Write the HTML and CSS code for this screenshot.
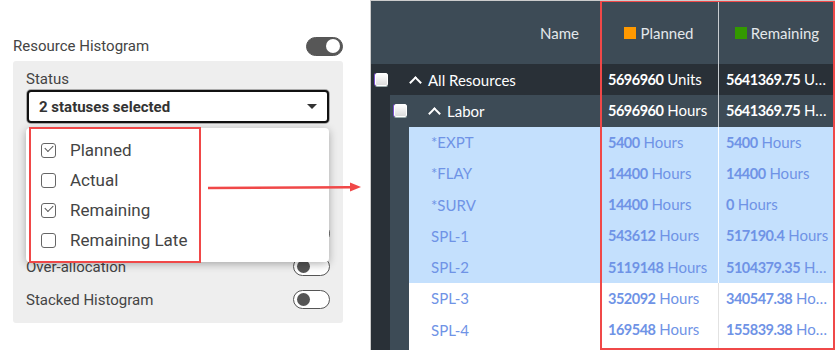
FILE: index.html
```html
<!DOCTYPE html>
<html lang="en">
<head>
    <meta charset="UTF-8">
    <meta name="viewport" content="width=device-width, initial-scale=1.0">
    <title>Resource Histogram</title>
    <link rel="stylesheet" href="styles.css">
</head>
<body>
    <div class="side">
        <div class="setting-row top">
            <span>Resource Histogram</span>
            <span class="toggle on"><span class="knob"></span></span>
        </div>
        <div class="settings">
            <div class="field-label">Status</div>
            <div class="select">
                <span>2 statuses selected</span>
                <span class="caret"></span>
            </div>
            <div class="toggles">
                <div class="setting-row"><span></span><span class="toggle"><span class="knob"></span></span></div>
                <div class="setting-row"><span>Over-allocation</span><span class="toggle"><span class="knob"></span></span></div>
                <div class="setting-row"><span>Stacked Histogram</span><span class="toggle"><span class="knob"></span></span></div>
            </div>

            <div class="dropdown">
                <div class="option"><span class="check checked"></span>Planned</div>
                <div class="option"><span class="check"></span>Actual</div>
                <div class="option"><span class="check checked"></span>Remaining</div>
                <div class="option"><span class="check"></span>Remaining Late</div>
            </div>
        </div>
        <div class="highlight-left"></div>
        <svg class="arrow" width="160" height="20" viewBox="0 0 160 20">
            <line x1="2" y1="9" x2="145" y2="8.2" stroke="#f04848" stroke-width="2.5"/>
            <polygon points="144,3.5 155,8 144,12.5" fill="#f04848"/>
        </svg>
    </div>

    <div class="grid">
        <div class="head">
            <div class="h-name">Name</div>
            <div class="h-col"><span class="swatch orange"></span>Planned</div>
            <div class="h-col"><span class="swatch green"></span>Remaining</div>
        </div>
        <div class="row lvl0">
            <div class="name"><span class="box"></span><span class="chev"></span>All Resources</div>
            <div class="val"><b>5696960</b> Units</div>
            <div class="val"><b>5641369.75</b> Units</div>
        </div>
        <div class="group g0">
            <div class="strip dark"></div>
            <div class="group-body">
                <div class="row lvl1">
                    <div class="name"><span class="box"></span><span class="chev"></span>Labor</div>
                    <div class="val"><b>5696960</b> Hours</div>
                    <div class="val"><b>5641369.75</b> Hours</div>
                </div>
                <div class="group">
                    <div class="strip slate"></div>
                    <div class="group-body">
                        <div class="row leaf sel"><div class="name">*EXPT</div><div class="val"><b>5400</b> Hours</div><div class="val"><b>5400</b> Hours</div></div>
                        <div class="row leaf sel"><div class="name">*FLAY</div><div class="val"><b>14400</b> Hours</div><div class="val"><b>14400</b> Hours</div></div>
                        <div class="row leaf sel"><div class="name">*SURV</div><div class="val"><b>14400</b> Hours</div><div class="val"><b>0</b> Hours</div></div>
                        <div class="row leaf sel"><div class="name">SPL-1</div><div class="val"><b>543612</b> Hours</div><div class="val"><b>517190.4</b> Hours</div></div>
                        <div class="row leaf sel"><div class="name">SPL-2</div><div class="val"><b>5119148</b> Hours</div><div class="val"><b>5104379.35</b> Hours</div></div>
                        <div class="row leaf"><div class="name">SPL-3</div><div class="val"><b>352092</b> Hours</div><div class="val"><b>340547.38</b> Hours</div></div>
                        <div class="row leaf"><div class="name">SPL-4</div><div class="val"><b>169548</b> Hours</div><div class="val"><b>155839.38</b> Hours</div></div>
                        <div class="row leaf filler"><div class="name"></div><div class="val"></div><div class="val"></div></div>
                    </div>
                </div>
            </div>
        </div>
        <div class="highlight-right"></div>
    </div>
</body>
</html>
```

FILE: styles.css
```css
body {
    margin: 0;
    display: flex;
    height: 350px;
    overflow: hidden;
    background-color: #fff;
}

/* left settings panel */

.side {
    position: relative;
    width: 370px;
    padding: 36px 0 0 13px;
    box-sizing: border-box;
    font-family: Roboto, "Liberation Sans", sans-serif;
    color: #444;
}

.setting-row {
    display: flex;
    justify-content: space-between;
    align-items: center;
    height: 33px;
    font-size: 15px;
}

.setting-row.top {
    width: 330px;
    height: 20px;
}

.toggles {
    margin-top: 94px;
}

.toggle {
    position: relative;
    width: 35px;
    height: 17px;
    border: 1px solid #555;
    border-radius: 10px;
    background-color: #fff;
}

.toggle .knob {
    position: absolute;
    left: 3px;
    top: 2px;
    width: 13px;
    height: 13px;
    border-radius: 50%;
    background-color: #555;
}

.toggle.on {
    background-color: #575757;
}

.toggle.on .knob {
    left: auto;
    right: 2px;
    width: 14px;
    height: 14px;
    top: 1.5px;
    background-color: #fff;
}

.settings {
    position: relative;
    width: 330px;
    height: 262px;
    margin-top: 5px;
    padding: 9px 13px 0 13px;
    box-sizing: border-box;
    background-color: #eee;
    border-radius: 3px;
    overflow: hidden;
}

.field-label {
    font-size: 15px;
    height: 20px;
}

.select {
    display: flex;
    justify-content: space-between;
    align-items: center;
    height: 33px;
    margin: 0 1px 1px 1px;
    padding: 0 10px;
    border: 2px solid #111;
    border-radius: 4px;
    box-sizing: border-box;
    background-color: #fff;
    font-size: 15px;
    font-weight: bold;
    color: #333;
    box-shadow: 0 0 0 1px #aaa;
}

.caret {
    width: 0;
    height: 0;
    border-left: 5px solid transparent;
    border-right: 5px solid transparent;
    border-top: 5px solid #333;
}

.dropdown {
    position: absolute;
    left: 13px;
    top: 67px;
    width: 303px;
    height: 134px;
    padding-top: 7px;
    box-sizing: border-box;
    background-color: #fff;
    border-radius: 4px;
    box-shadow: 0 2px 8px rgba(0,0,0,0.3);
}

.option {
    display: flex;
    align-items: center;
    height: 30px;
    padding-left: 15px;
    font-size: 17px;
    color: #444;
}

.check {
    position: relative;
    width: 13px;
    height: 13px;
    margin-right: 14px;
    border: 1.5px solid #666;
    border-radius: 3px;
}

.check.checked::after {
    content: "";
    position: absolute;
    left: 3px;
    top: 1px;
    width: 7px;
    height: 4px;
    border-left: 1.3px solid #555;
    border-bottom: 1.3px solid #555;
    transform: rotate(-45deg);
}

.highlight-left {
    position: absolute;
    left: 29px;
    top: 127px;
    width: 168px;
    height: 132px;
    border: 2px solid #f04848;
}

.arrow {
    position: absolute;
    left: 206px;
    top: 179px;
}

/* resource grid */

.grid {
    position: relative;
    width: 465px;
    height: 350px;
    overflow: hidden;
    border-left: 1px solid #ccc;
    border-top: 1px solid #ccc;
    box-sizing: border-box;
    font-family: Lato, "Liberation Sans", sans-serif;
    font-size: 15px;
    background-color: #fff;
}

.head {
    display: grid;
    grid-template-columns: 1fr 118px 117px;
    height: 63px;
    background-color: #3d4b56;
    color: #e4e8eb;
}

.h-name {
    display: flex;
    align-items: center;
    justify-content: flex-end;
    padding-right: 21px;
}

.h-col {
    display: flex;
    align-items: center;
    justify-content: center;
}

.h-col:last-child {
    border-left: 1px solid #c8cdd1;
}

.swatch {
    width: 12px;
    height: 12px;
    margin-right: 4px;
}

.swatch.orange {
    background-color: #ff9900;
}

.swatch.green {
    background-color: #339900;
}

.row {
    display: grid;
    grid-template-columns: minmax(0, 1fr) 118px 117px;
    height: 31.25px;
}

.name {
    display: flex;
    align-items: center;
    white-space: nowrap;
    overflow: hidden;
}

.val {
    min-width: 0;
    padding-left: 8px;
    line-height: 31.25px;
    white-space: nowrap;
    overflow: hidden;
    text-overflow: ellipsis;
}

.val b {
    font-size: 14.5px;
    letter-spacing: -0.5px;
}

.val:last-child {
    border-left: 1px solid #e2e2e2;
    padding-left: 7px;
    padding-right: 4px;
}

.lvl0 {
    background-color: #293037;
    color: #fff;
}

.lvl1 {
    background-color: #3d4b56;
    color: #fff;
}

.lvl0 .val:last-child,
.lvl1 .val:last-child {
    border-left-color: #c8cdd1;
}

.lvl0 .name,
.lvl1 .name {
    padding-left: 4px;
}

.box {
    width: 11px;
    height: 11px;
    border: 1px solid #fff;
    border-radius: 2px;
    background: linear-gradient(#fff, #dcdcdc);
    box-shadow: -1px 0 0 #7a4fd0, 0 1px 0 #9aa;
    margin-right: 22px;
}

.chev {
    width: 7px;
    height: 7px;
    margin: 5px 8px 0 1px;
    border-left: 2px solid #fff;
    border-top: 2px solid #fff;
    transform: rotate(45deg);
}

.group {
    display: flex;
}

.strip {
    width: 19px;
    flex-shrink: 0;
}

.strip.dark {
    background-color: #293037;
}

.strip.slate {
    background-color: #3d4b56;
}

.group-body {
    flex: 1;
    min-width: 0;
}

.leaf {
    color: #6f93e6;
}

.leaf .name {
    padding-left: 22px;
}

.leaf.sel {
    background-color: #c4e0fd;
}

.leaf.sel .val:last-child {
    border-left-color: #fff;
}

.highlight-right {
    position: absolute;
    left: 229px;
    top: -1px;
    width: 231px;
    height: 346px;
    border: 2px solid #f04848;
}
```
